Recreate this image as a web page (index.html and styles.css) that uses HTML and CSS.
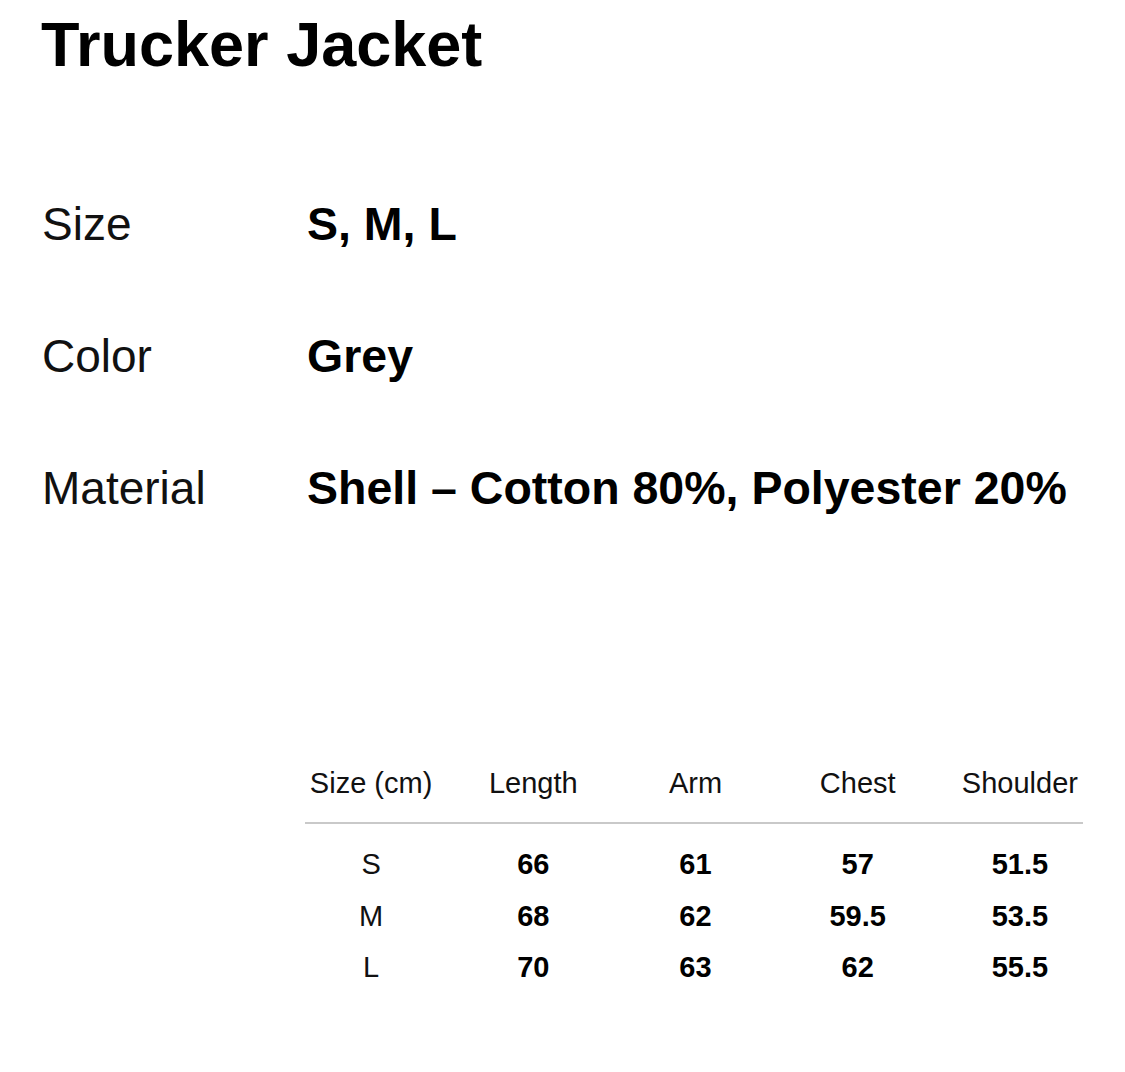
FILE: index.html
```html
<!DOCTYPE html>
<html lang="en">
<head>
<meta charset="utf-8">
<title>Trucker Jacket</title>
<link rel="stylesheet" href="styles.css">
</head>
<body>
<main class="page">
  <h1 class="title">Trucker Jacket</h1>
  <dl class="specs">
    <div class="spec"><dt class="spec-label">Size</dt><dd class="spec-value">S, M, L</dd></div>
    <div class="spec"><dt class="spec-label">Color</dt><dd class="spec-value">Grey</dd></div>
    <div class="spec"><dt class="spec-label">Material</dt><dd class="spec-value">Shell – Cotton 80%, Polyester 20%</dd></div>
  </dl>
  <section class="size-table">
    <div class="row head">
      <span>Size (cm)</span><span>Length</span><span>Arm</span><span>Chest</span><span>Shoulder</span>
    </div>
    <div class="rule"></div>
    <div class="body">
      <div class="row"><span class="sz">S</span><span>66</span><span>61</span><span>57</span><span>51.5</span></div>
      <div class="row"><span class="sz">M</span><span>68</span><span>62</span><span>59.5</span><span>53.5</span></div>
      <div class="row"><span class="sz">L</span><span>70</span><span>63</span><span>62</span><span>55.5</span></div>
    </div>
  </section>
</main>
</body>
</html>
```

FILE: styles.css
```css
html, body {
  margin: 0;
  padding: 0;
  background: #ffffff;
}

body {
  font-family: "Liberation Sans", Arial, Helvetica, sans-serif;
  color: #000000;
}

.page {
  padding: 13px 0 0 0;
}

.title {
  margin: 0 0 0 41px;
  font-size: 63px;
  line-height: 63px;
  font-weight: 700;
  letter-spacing: 0;
}

.specs {
  margin: 125px 0 0 42px;
  padding: 0;
  display: flex;
  flex-direction: column;
  gap: 86px;
}

.spec {
  display: grid;
  grid-template-columns: 265px 1fr;
  font-size: 46px;
  line-height: 46px;
}

.spec-label {
  font-weight: 400;
  color: #111111;
}

.spec-value {
  margin: 0;
  font-size: 46.5px;
  font-weight: 700;
}

.size-table {
  margin: 258px 0 0 290px;
  width: 811px;
  font-size: 29px;
  line-height: 29px;
}

.row {
  display: grid;
  grid-template-columns: repeat(5, 1fr);
  text-align: center;
}

.head {
  font-weight: 400;
  color: #111111;
}

.rule {
  margin: 24px 18px 0 15px;
  height: 2px;
  background: #c9c9c9;
}

.body {
  padding-top: 26px;
  display: flex;
  flex-direction: column;
  gap: 22.5px;
}

.body .row span {
  font-weight: 700;
}

.body .row .sz {
  font-weight: 400;
  color: #111111;
}
```
